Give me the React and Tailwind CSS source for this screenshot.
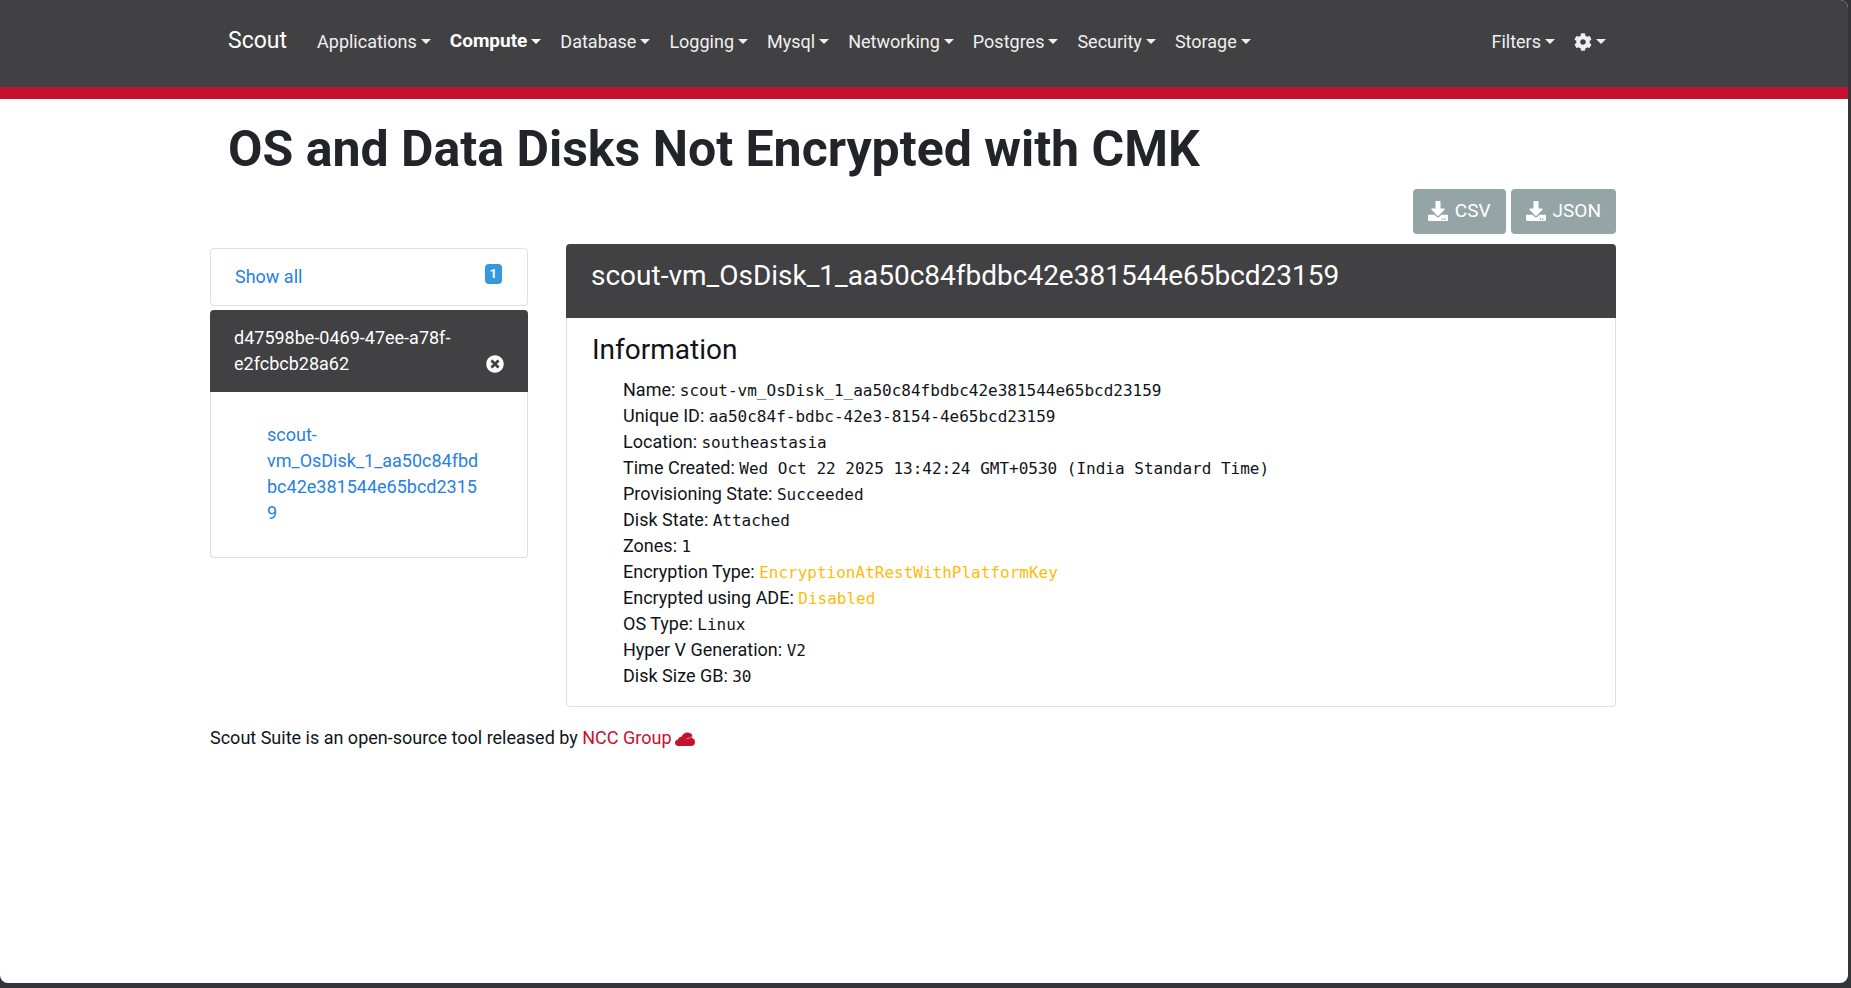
import { FaCog, FaDownload, FaTimesCircle } from "react-icons/fa";

const services = [
  "Applications",
  "Compute",
  "Database",
  "Logging",
  "Mysql",
  "Networking",
  "Postgres",
  "Security",
  "Storage",
];

const diskName = "scout-vm_OsDisk_1_aa50c84fbdbc42e381544e65bcd23159";

const details = [
  { label: "Name", value: diskName },
  { label: "Unique ID", value: "aa50c84f-bdbc-42e3-8154-4e65bcd23159" },
  { label: "Location", value: "southeastasia" },
  { label: "Time Created", value: "Wed Oct 22 2025 13:42:24 GMT+0530 (India Standard Time)" },
  { label: "Provisioning State", value: "Succeeded" },
  { label: "Disk State", value: "Attached" },
  { label: "Zones", value: "1" },
  { label: "Encryption Type", value: "EncryptionAtRestWithPlatformKey", warning: true },
  { label: "Encrypted using ADE", value: "Disabled", warning: true },
  { label: "OS Type", value: "Linux" },
  { label: "Hyper V Generation", value: "V2" },
  { label: "Disk Size GB", value: "30" },
];

function Caret() {
  return (
    <svg className="mb-px h-[5px] w-[10px]" viewBox="0 0 10 5" fill="currentColor" aria-hidden="true">
      <path d="M0 0h10L5 5z" />
    </svg>
  );
}

function Menu({ children, active = false, label }) {
  return (
    <button
      type="button"
      aria-label={label}
      className={
        active
          ? "flex items-center gap-1 text-[19px] font-bold text-white"
          : "flex items-center gap-1 text-[#f0f0f0]"
      }
    >
      {children}
      <Caret />
    </button>
  );
}

function Header() {
  return (
    <header className="border-b-12 border-[#c5112e] bg-[#414042] px-[210px]">
      <nav className="flex h-[87px] items-center pr-8 pb-1 pl-[18px] text-[18px]">
        <a href="#home" className="mr-[30px] text-[23px] text-white">
          Scout
        </a>
        <div className="flex gap-[19px]">
          {services.map((name) => (
            <Menu key={name} active={name === "Compute"}>
              {name}
            </Menu>
          ))}
        </div>
        <div className="ml-auto flex gap-[19px]">
          <Menu>Filters</Menu>
          <Menu label="Settings">
            <FaCog />
          </Menu>
        </div>
      </nav>
    </header>
  );
}

function ExportButton({ children }) {
  return (
    <button
      type="button"
      className="flex h-[45px] items-center gap-[7px] rounded bg-[#95a5a6] px-[15px] text-[19px] text-white"
    >
      <FaDownload className="mb-0.5 size-5" />
      {children}
    </button>
  );
}

function Sidebar() {
  return (
    <aside className="mt-1 w-[318px] shrink-0">
      <div className="flex h-[58px] items-start justify-between rounded border border-[#dfdfdf] pt-[15px] pr-[25px] pl-6">
        <a href="#all" className="leading-[26px] text-[#2780e3]">
          Show all
        </a>
        <span className="rounded bg-[#3498db] px-[5px] text-[13px] leading-5 font-bold text-white">1</span>
      </div>
      <div className="mt-1 flex items-end justify-between rounded-t bg-[#414042] py-[15px] pr-6 pl-6 leading-[26px] text-white">
        <a href="#subscription">
          d47598be-0469-47ee-a78f-
          <br />
          e2fcbcb28a62
        </a>
        <button type="button" aria-label="Clear selection" className="mb-1">
          <FaTimesCircle className="size-[18px]" />
        </button>
      </div>
      <div className="rounded-b border border-t-0 border-[#dfdfdf] pt-[30px] pr-11 pb-[31px] pl-14">
        <a href="#disk" className="block leading-[26px] break-words text-[#2780e3]">
          {diskName}
        </a>
      </div>
    </aside>
  );
}

function DiskPanel() {
  return (
    <section className="min-w-0 flex-1">
      <h2 className="h-[74px] rounded-t bg-[#414042] px-[25px] pt-[15px] text-[28px] leading-[34px] text-white">
        {diskName}
      </h2>
      <div className="rounded-b border border-t-0 border-[#dfdfdf] px-[25px] pt-[15px] pb-[17px]">
        <h3 className="text-[28px] leading-[34px]">Information</h3>
        <ul className="mt-[10px] pl-[31px] leading-[26px]">
          {details.map(({ label, value, warning }) => (
            <li key={label}>
              {label}:{" "}
              <samp
                className={
                  warning
                    ? "font-['DejaVu_Sans_Mono',monospace] text-[16px] leading-none text-[#ffbb0a]"
                    : "font-['DejaVu_Sans_Mono',monospace] text-[16px] leading-none"
                }
              >
                {value}
              </samp>
            </li>
          ))}
        </ul>
      </div>
    </section>
  );
}

function Footer() {
  return (
    <footer className="mt-[18px] flex items-center leading-[26px]">
      <p>
        Scout Suite is an open-source tool released by{" "}
        <a href="#ncc" className="text-[#c5112e]">
          NCC Group
        </a>
      </p>
      <svg className="mt-0.5 ml-1 h-[14px] w-5" viewBox="0 0 20 14" aria-hidden="true">
        <path
          fill="#c5112e"
          d="M3.500 14C1.200 14 0 12.600 0 10.700C0 8.700 1.400 7.600 3.200 7.400C3.400 5.600 5 4.600 6.600 4.800C7.600 2.200 9.800 .6 12.400 .6C14.800 .6 16.600 1.600 17.200 3.400C17.600 4.600 17.200 5.400 16.600 6C18.800 6.200 20 7.800 20 10C20 12.400 18.600 14 16.200 14Z"
        />
        <path fill="none" stroke="#f0b8c0" strokeWidth=".7" d="M11.500 6.600C13.500 6.600 15.500 5.800 17.600 4" />
      </svg>
    </footer>
  );
}

export default function App() {
  return (
    <div className="flex min-h-screen flex-col bg-[#343538] pr-[3px] pb-[5px] font-[Roboto,sans-serif] text-[18px] text-[#101418]">
      <div className="flex-1 overflow-hidden rounded-tr-lg rounded-br-lg rounded-bl-lg bg-white">
        <Header />
        <main className="pr-[232px] pl-[210px]">
          <h1 className="px-[18px] pt-5 text-[50px] leading-[60px] font-bold text-[#212529]">
            OS and Data Disks Not Encrypted with CMK
          </h1>
          <div className="mt-[10px] flex justify-end gap-[5px]">
            <ExportButton>CSV</ExportButton>
            <ExportButton>JSON</ExportButton>
          </div>
          <div className="mt-[10px] flex items-start gap-[38px]">
            <Sidebar />
            <DiskPanel />
          </div>
          <Footer />
        </main>
      </div>
    </div>
  );
}
